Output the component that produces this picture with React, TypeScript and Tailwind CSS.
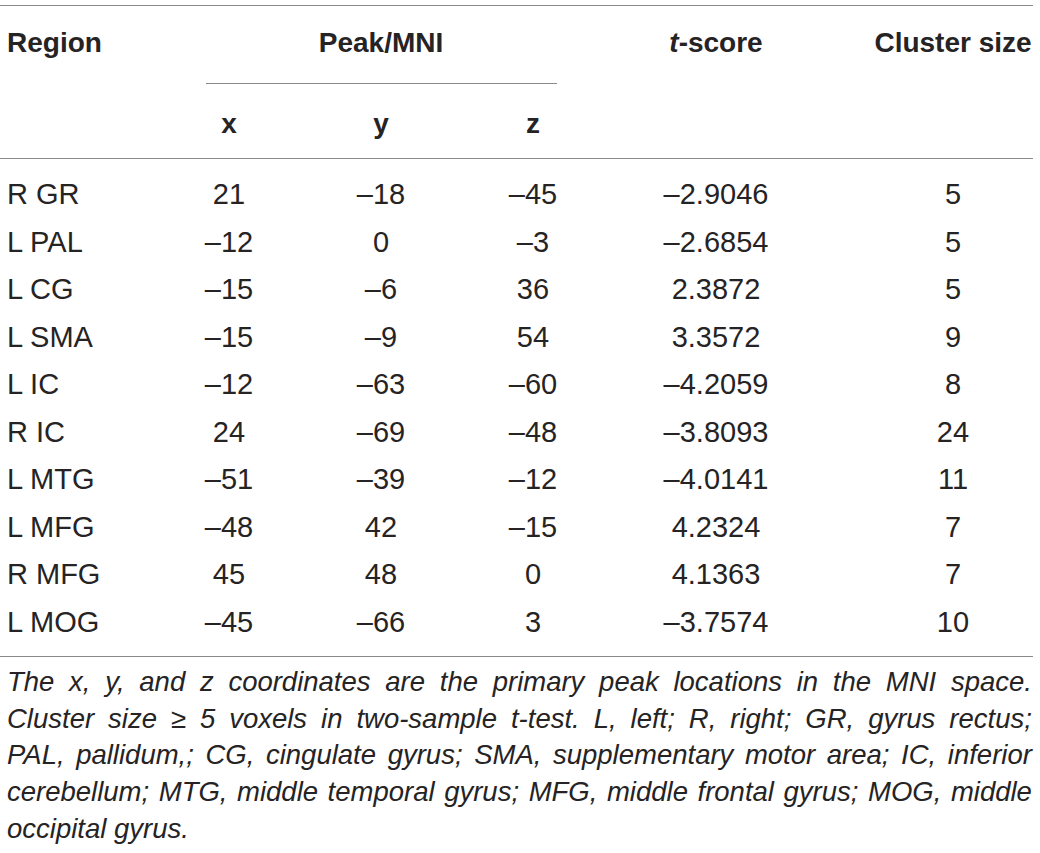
import React from "react";

const rows: [string, string, string, string, string, string][] = [
  ["R GR", "21", "–18", "–45", "–2.9046", "5"],
  ["L PAL", "–12", "0", "–3", "–2.6854", "5"],
  ["L CG", "–15", "–6", "36", "2.3872", "5"],
  ["L SMA", "–15", "–9", "54", "3.3572", "9"],
  ["L IC", "–12", "–63", "–60", "–4.2059", "8"],
  ["R IC", "24", "–69", "–48", "–3.8093", "24"],
  ["L MTG", "–51", "–39", "–12", "–4.0141", "11"],
  ["L MFG", "–48", "42", "–15", "4.2324", "7"],
  ["R MFG", "45", "48", "0", "4.1363", "7"],
  ["L MOG", "–45", "–66", "3", "–3.7574", "10"],
];

const captionLines = [
  "The x, y, and z coordinates are the primary peak locations in the MNI space.",
  "Cluster size ≥ 5 voxels in two-sample t-test. L, left; R, right; GR, gyrus rectus;",
  "PAL, pallidum,; CG, cingulate gyrus; SMA, supplementary motor area; IC, inferior",
  "cerebellum; MTG, middle temporal gyrus; MFG, middle frontal gyrus; MOG, middle",
];

export default function App() {
  return (
    <div
      className="w-[1040px] h-[853px] bg-white text-[#262324] overflow-hidden"
      style={{ fontFamily: '"Liberation Sans", Arial, sans-serif' }}
    >
      <div className="w-[1033px] pt-[5px]">
        {/* Header */}
        <div className="flex border-t border-b border-[#8a8a8a] text-[28px] font-bold leading-[30px]">
          <div className="w-[153px] pl-[7px] pt-[22px]">Region</div>
          <div className="w-[456px] flex flex-col">
            <div className="h-[77px] pt-[22px] text-center">Peak/MNI</div>
            <div className="ml-[53px] mr-[52px] h-px bg-[#8a8a8a]" />
            <div className="h-[74px] pt-[25px] flex">
              <div className="w-[152px] text-center">x</div>
              <div className="w-[152px] text-center">y</div>
              <div className="w-[152px] text-center">z</div>
            </div>
          </div>
          <div className="w-[214px] pt-[22px] text-center">
            <span className="italic">t</span>-score
          </div>
          <div className="flex-1 pl-[50px] pt-[22px] text-center whitespace-nowrap">
            Cluster size
          </div>
        </div>
        {/* Body */}
        <div className="pt-[12px] pb-[10px] border-b border-[#8a8a8a] text-[29px]">
          {rows.map((r, i) => (
            <div key={i} className="flex h-[47.5px] leading-[47.5px]">
              <div className="w-[153px] pl-[7px]">{r[0]}</div>
              <div className="w-[152px] text-center">{r[1]}</div>
              <div className="w-[152px] text-center">{r[2]}</div>
              <div className="w-[152px] text-center">{r[3]}</div>
              <div className="w-[214px] text-center">{r[4]}</div>
              <div className="flex-1 pl-[50px] text-center">{r[5]}</div>
            </div>
          ))}
        </div>
        {/* Caption */}
        <div className="pt-[7px] pl-[7px] pr-[1px] italic text-[27.5px]">
          {captionLines.map((line, i) => (
            <div key={i} className="flex justify-between h-[36.7px] leading-[36.7px] whitespace-nowrap">
              {line.split(" ").map((w, j) => (
                <span key={j}>{w}</span>
              ))}
            </div>
          ))}
          <div className="h-[36.7px] leading-[36.7px]">occipital gyrus.</div>
        </div>
      </div>
    </div>
  );
}
